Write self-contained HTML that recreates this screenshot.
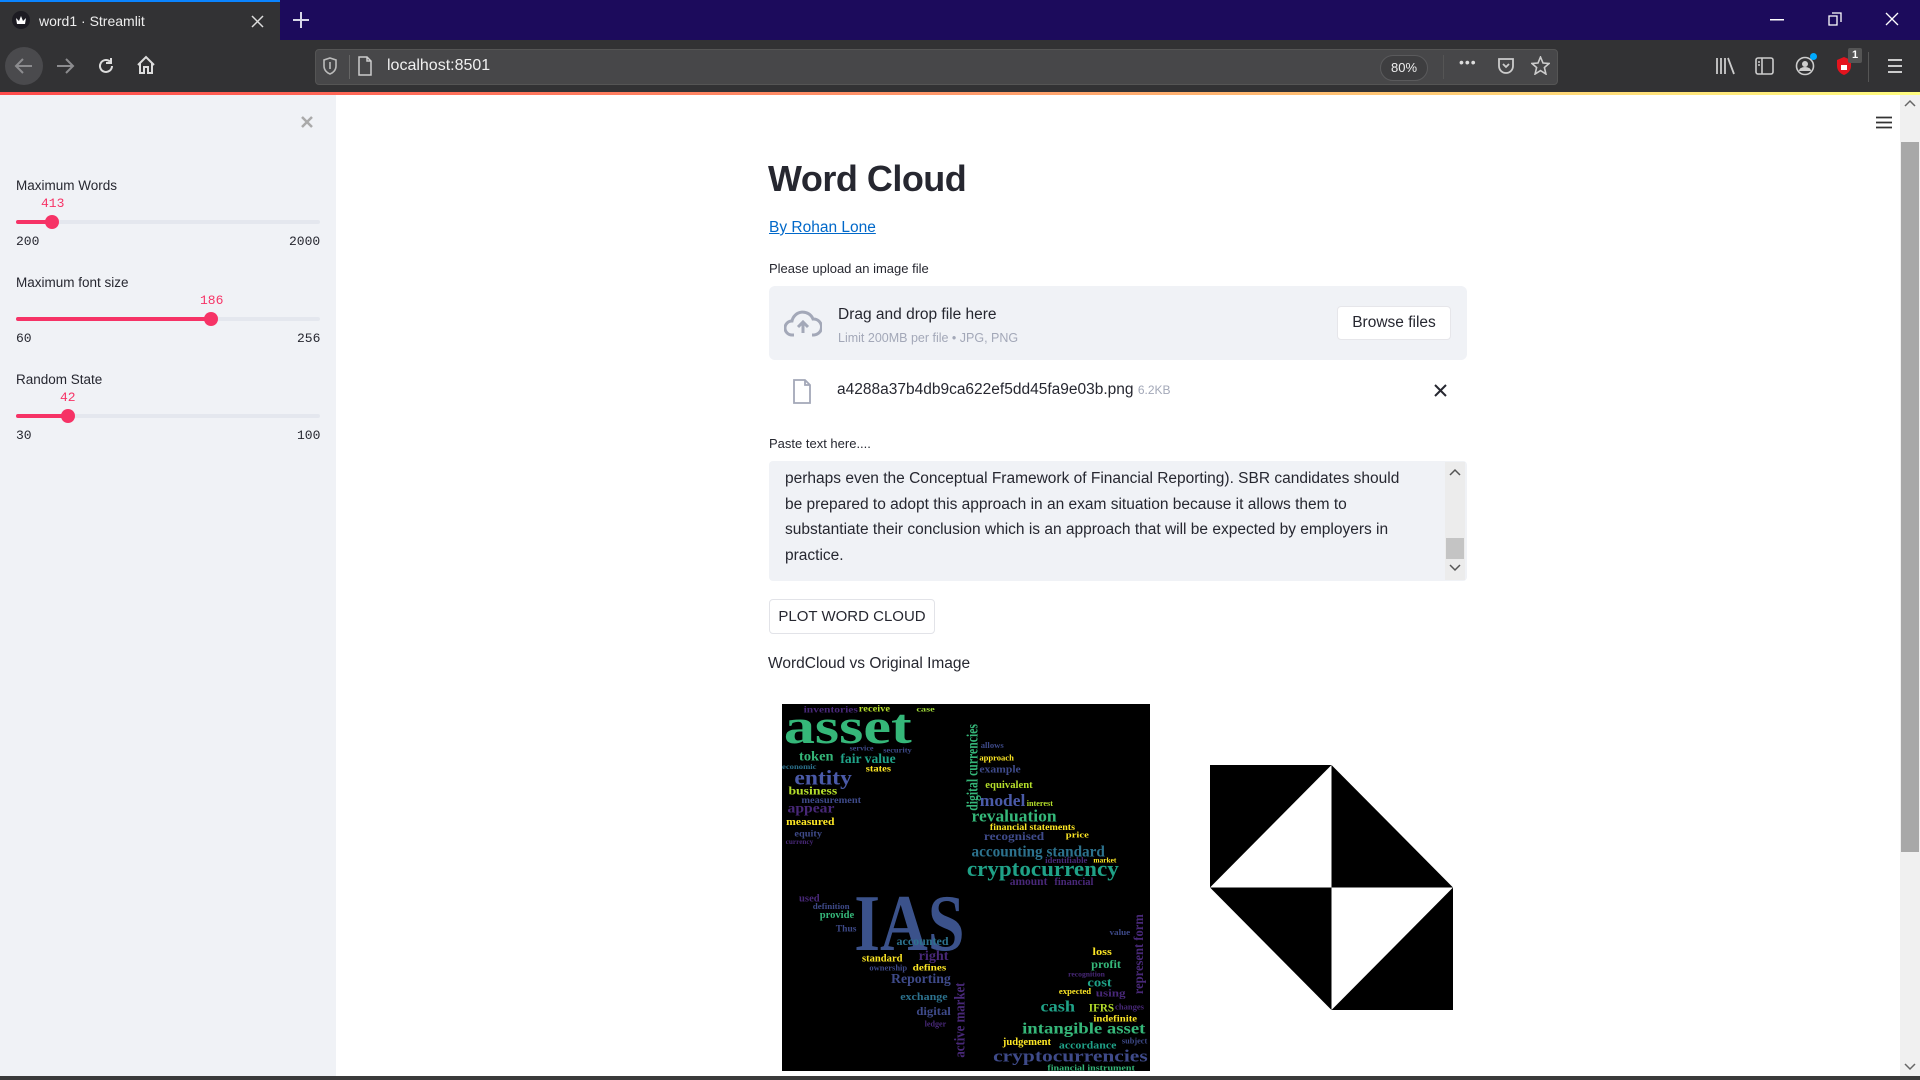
<!DOCTYPE html>
<html><head><meta charset="utf-8"><style>
*{margin:0;padding:0;box-sizing:border-box}
body{width:1920px;height:1080px;overflow:hidden;position:relative;font-family:"Liberation Sans",sans-serif;background:#fff;color:#262730}
.a{position:absolute}
.tabbar{left:0;top:0;width:1920px;height:40px;background:#1c0b5c}
.tab{left:0;top:0;width:280px;height:40px;background:#323234;border-top:2px solid #0a84ff}
.toolbar{left:0;top:40px;width:1920px;height:53px;background:#323234}
.url{left:315px;top:49px;width:1243px;height:36px;background:#474749;border:1px solid #555;border-radius:4px}
.grad{left:0;top:92px;width:1920px;height:3px;background:linear-gradient(90deg,#ff4b4b,#ff9a6b 50%,#fffd80)}
.side{left:0;top:95px;width:336px;height:982px;background:#f0f2f6}
.lab{font-size:13.5px;color:#262730}
.val{font-family:"Liberation Mono",monospace;font-size:13px;color:#f63366}
.mm{font-family:"Liberation Mono",monospace;font-size:13px;color:#262730}
.track{height:4px;background:#e4e7ee;border-radius:2px;left:16px;width:304px}
.fill{height:4px;background:#f63366;border-radius:2px;left:16px}
.thumb{width:14px;height:14px;border-radius:50%;background:#f63366}
.small{font-size:13px;color:#262730}
.wc text{font-family:"Liberation Serif",serif;font-weight:bold}
</style></head><body>
<div class="a tabbar"></div>
<div class="a tab">
 <div class="a" style="left:12px;top:9px;width:18px;height:18px;border-radius:50%;background:#1c1b22"></div>
 <svg class="a" style="left:14px;top:11px" width="14" height="14" viewBox="0 0 14 14"><path d="M2 5l3 3 2-5 2 5 3-3-1 6H3z" fill="#fff"/></svg>
 <div class="a" style="left:39px;top:11px;font-size:14px;color:#eee">word1 · Streamlit</div>
 <svg class="a" style="left:251px;top:13px" width="13" height="13"><path d="M1 1L12 12M12 1L1 12" stroke="#ddd" stroke-width="1.5"/></svg>
</div>
<svg class="a" style="left:292px;top:11px" width="18" height="18"><path d="M9 1v16M1 9h16" stroke="#d8d8e8" stroke-width="2"/></svg>
<svg class="a" style="left:1770px;top:19px" width="14" height="2"><rect width="14" height="1.5" fill="#fff"/></svg>
<svg class="a" style="left:1828px;top:12px" width="14" height="14"><path d="M4 1h9v9M1 4h8v9H1z" stroke="#fff" fill="none" stroke-width="1.3"/></svg>
<svg class="a" style="left:1885px;top:12px" width="14" height="14"><path d="M1 1L13 13M13 1L1 13" stroke="#fff" stroke-width="1.3"/></svg>

<div class="a toolbar"></div>
<div class="a" style="left:5px;top:47px;width:38px;height:38px;border-radius:50%;background:#4a4a4d"></div>
<svg class="a" style="left:14px;top:56px" width="20" height="20"><path d="M18 10H3M9 3L2 10l7 7" stroke="#8c8c8f" stroke-width="2" fill="none"/></svg>
<svg class="a" style="left:55px;top:56px" width="20" height="20"><path d="M2 10h15M11 3l7 7-7 7" stroke="#8c8c8f" stroke-width="2" fill="none"/></svg>
<svg class="a" style="left:96px;top:56px" width="20" height="20"><path d="M16 10a6 6 0 1 1-2-4.5M15 2v5h-5" stroke="#ddd" stroke-width="2" fill="none"/></svg>
<svg class="a" style="left:136px;top:55px" width="20" height="20"><path d="M2 10L10 2l8 8M4 8v10h4v-6h4v6h4V8" stroke="#ddd" stroke-width="2" fill="none"/></svg>
<div class="a url"></div>
<svg class="a" style="left:323px;top:57px" width="14" height="18"><path d="M7 1l6 2v6c0 4-3 7-6 8-3-1-6-4-6-8V3z M7 5v7" stroke="#bbb" stroke-width="1.6" fill="none"/></svg>
<div class="a" style="left:349px;top:55px;width:1px;height:24px;background:#666"></div>
<svg class="a" style="left:357px;top:56px" width="16" height="20"><path d="M2 1h8l4 4v14H2z M10 1v4h4" stroke="#ccc" stroke-width="1.5" fill="none"/></svg>
<div class="a" style="left:387px;top:57px;font-size:16px;color:#f0f0f0">localhost:8501</div>
<div class="a" style="left:1380px;top:55px;width:48px;height:26px;border-radius:13px;border:1px solid #5a5a5c;background:#3e3e40;font-size:13px;color:#eee;text-align:center;line-height:24px">80%</div>
<div class="a" style="left:1443px;top:55px;width:1px;height:24px;background:#555"></div>
<div class="a" style="left:1459px;top:54px;font-size:14px;color:#ddd;letter-spacing:1px">•••</div>
<svg class="a" style="left:1497px;top:57px" width="18" height="18"><path d="M2 2h14v7a7 7 0 0 1-14 0z M6 7l3 3 3-3" stroke="#ccc" stroke-width="1.8" fill="none"/></svg>
<svg class="a" style="left:1531px;top:56px" width="19" height="19"><path d="M9.5 1l2.5 6 6 .5-4.6 4 1.5 6.5-5.4-3.4L4.1 18l1.5-6.5L1 7.5l6-.5z" stroke="#ccc" stroke-width="1.6" fill="none"/></svg>
<svg class="a" style="left:1715px;top:57px" width="20" height="18"><path d="M2 1v16M6 1v16M10 1v16M13 1l6 16" stroke="#ccc" stroke-width="1.8"/></svg>
<svg class="a" style="left:1755px;top:57px" width="19" height="18"><rect x="1" y="1" width="17" height="16" rx="2" stroke="#ccc" stroke-width="1.6" fill="none"/><path d="M7 1v16M3 5h2M3 8h2" stroke="#ccc" stroke-width="1.6"/></svg>
<svg class="a" style="left:1795px;top:56px" width="20" height="20"><circle cx="10" cy="10" r="8.5" stroke="#ccc" stroke-width="1.6" fill="none"/><circle cx="10" cy="8" r="3" fill="#ccc"/><path d="M4 15a6 4 0 0 1 12 0" fill="#ccc"/></svg>
<div class="a" style="left:1810px;top:53px;width:7px;height:7px;border-radius:50%;background:#0af"></div>
<svg class="a" style="left:1836px;top:56px" width="16" height="20"><path d="M8 1l7 3v6c0 5-4 8-7 9-3-1-7-4-7-9V4z" fill="#e4141e"/><rect x="5" y="9" width="6" height="5" fill="#fff"/></svg>
<div class="a" style="left:1848px;top:48px;width:14px;height:15px;background:#555;color:#fff;font-size:11px;font-weight:bold;text-align:center;line-height:15px;border-radius:2px">1</div>
<div class="a" style="left:1868px;top:52px;width:1px;height:30px;background:#555"></div>
<svg class="a" style="left:1887px;top:58px" width="16" height="16"><path d="M1 2h14M1 8h14M1 14h14" stroke="#ccc" stroke-width="2"/></svg>
<div class="a grad"></div>

<div class="a side"></div>
<svg class="a" style="left:301px;top:116px" width="12" height="12"><path d="M1 1L11 11M11 1L1 11" stroke="#aaa" stroke-width="2.5"/></svg>
<div class="a lab" style="left:16px;top:178px">Maximum Words</div>
<div class="a val" style="left:41px;top:196px">413</div>
<div class="a track" style="top:220px"></div><div class="a fill" style="top:220px;width:36px"></div><div class="a thumb" style="left:45px;top:215px"></div>
<div class="a mm" style="left:16px;top:234px">200</div><div class="a mm" style="left:289px;top:234px">2000</div>
<div class="a lab" style="left:16px;top:275px">Maximum font size</div>
<div class="a val" style="left:200px;top:293px">186</div>
<div class="a track" style="top:317px"></div><div class="a fill" style="top:317px;width:195px"></div><div class="a thumb" style="left:204px;top:312px"></div>
<div class="a mm" style="left:16px;top:331px">60</div><div class="a mm" style="left:297px;top:331px">256</div>
<div class="a lab" style="left:16px;top:372px">Random State</div>
<div class="a val" style="left:60px;top:390px">42</div>
<div class="a track" style="top:414px"></div><div class="a fill" style="top:414px;width:52px"></div><div class="a thumb" style="left:61px;top:409px"></div>
<div class="a mm" style="left:16px;top:428px">30</div><div class="a mm" style="left:297px;top:428px">100</div>

<svg class="a" style="left:1876px;top:116px" width="16" height="13"><path d="M0 1.5h16M0 6.5h16M0 11.5h16" stroke="#333" stroke-width="1.8"/></svg>
<div class="a" style="left:1900px;top:95px;width:20px;height:982px;background:#f0f0f0"></div>
<div class="a" style="left:1901px;top:142px;width:18px;height:710px;background:#a8a8a8"></div>
<svg class="a" style="left:1904px;top:99px" width="12" height="8"><path d="M1 7l5-5 5 5" stroke="#666" stroke-width="1.5" fill="none"/></svg>
<svg class="a" style="left:1904px;top:1063px" width="12" height="8"><path d="M1 1l5 5 5-5" stroke="#666" stroke-width="1.5" fill="none"/></svg>
<div class="a" style="left:0;top:1076px;width:1920px;height:4px;background:#3a3a3a"></div>

<div class="a" style="left:768px;top:158px;font-size:36px;font-weight:bold;color:#262730;letter-spacing:-0.5px">Word Cloud</div>
<div class="a" style="left:769px;top:219px;font-size:15.5px;color:#0068c9;text-decoration:underline">By Rohan Lone</div>
<div class="a small" style="left:769px;top:261px">Please upload an image file</div>
<div class="a" style="left:769px;top:286px;width:698px;height:74px;background:#f0f2f6;border-radius:6px"></div>
<svg class="a" style="left:784px;top:309px" width="38" height="28" viewBox="0 0 38 28"><path d="M10 26H8a7 7 0 0 1 0-14 11 11 0 0 1 21-2 8 8 0 0 1 1 16h-2" stroke="#a3a8b8" stroke-width="3" fill="none"/><path d="M19 24V13M14 18l5-5 5 5" stroke="#a3a8b8" stroke-width="3" fill="none"/></svg>
<div class="a" style="left:838px;top:306px;font-size:15.5px;color:#262730">Drag and drop file here</div>
<div class="a" style="left:838px;top:331px;font-size:12.5px;color:#a3a8b8">Limit 200MB per file • JPG, PNG</div>
<div class="a" style="left:1337px;top:306px;width:114px;height:34px;background:#fff;border:1px solid #e6e6ea;border-radius:4px;font-size:15.5px;text-align:center;line-height:32px;color:#262730">Browse files</div>
<svg class="a" style="left:793px;top:379px" width="18" height="25"><path d="M1 1h11l5 5v18H1z M12 1v5h5" stroke="#a3a8b8" stroke-width="1.8" fill="none"/></svg>
<div class="a" style="left:837px;top:381px;font-size:15.5px;color:#262730">a4288a37b4db9ca622ef5dd45fa9e03b.png <span style="font-size:12px;color:#a3a8b8">6.2KB</span></div>
<svg class="a" style="left:1434px;top:384px" width="13" height="13"><path d="M1 1L12 12M12 1L1 12" stroke="#262730" stroke-width="2"/></svg>
<div class="a small" style="left:769px;top:436px">Paste text here....</div>
<div class="a" style="left:769px;top:461px;width:698px;height:120px;background:#f0f2f6;border-radius:4px"></div>
<div class="a" style="left:785px;top:466px;font-size:15.5px;line-height:25.7px;color:#262730;white-space:nowrap">perhaps even the Conceptual Framework of Financial Reporting). SBR candidates should<br>be prepared to adopt this approach in an exam situation because it allows them to<br>substantiate their conclusion which is an approach that will be expected by employers in<br>practice.</div>
<div class="a" style="left:1445px;top:462px;width:20px;height:118px;background:#ececec"></div>
<div class="a" style="left:1446px;top:538px;width:18px;height:21px;background:#c4c4c4"></div>
<svg class="a" style="left:1449px;top:468px" width="12" height="8"><path d="M1 7l5-5 5 5" stroke="#555" stroke-width="1.5" fill="none"/></svg>
<svg class="a" style="left:1449px;top:564px" width="12" height="8"><path d="M1 1l5 5 5-5" stroke="#555" stroke-width="1.5" fill="none"/></svg>
<div class="a" style="left:769px;top:599px;width:166px;height:35px;border:1px solid #e2e3e8;border-radius:4px;font-size:15px;line-height:33px;text-align:center;color:#262730">PLOT WORD CLOUD</div>
<div class="a" style="left:768px;top:655px;font-size:15.5px;color:#262730">WordCloud vs Original Image</div>

<svg class="a wc" style="left:782px;top:704px" width="368" height="367" viewBox="0 0 800 1100" preserveAspectRatio="none">
<rect width="800" height="1100" fill="#000"/>
<g font-size="28">
<text x="4" y="117" font-size="150" fill="#35b779" textLength="278" lengthAdjust="spacingAndGlyphs">asset</text>
<text x="47" y="25" fill="#482878" textLength="118" lengthAdjust="spacingAndGlyphs">inventories</text>
<text x="167" y="22" fill="#b5de2b" textLength="68" lengthAdjust="spacingAndGlyphs">receive</text>
<text x="292" y="22" fill="#a0da39" font-size="22" textLength="40" lengthAdjust="spacingAndGlyphs">case</text>
<text x="147" y="139" fill="#3e4a89" font-size="22" textLength="52" lengthAdjust="spacingAndGlyphs">service</text>
<text x="220" y="145" fill="#3e4a89" font-size="22" textLength="62" lengthAdjust="spacingAndGlyphs">security</text>
<text x="37" y="169" fill="#35b779" font-size="40" textLength="75" lengthAdjust="spacingAndGlyphs">token</text>
<text x="127" y="177" fill="#1fa187" font-size="42" textLength="120" lengthAdjust="spacingAndGlyphs">fair value</text>
<text x="0" y="195" fill="#2c728e" font-size="22" textLength="75" lengthAdjust="spacingAndGlyphs">economic</text>
<text x="182" y="202" fill="#fde725" font-size="28" textLength="55" lengthAdjust="spacingAndGlyphs">states</text>
<text x="27" y="242" fill="#4a5aa8" font-size="64" textLength="125" lengthAdjust="spacingAndGlyphs">entity</text>
<text x="14" y="272" fill="#b5de2b" font-size="36" textLength="106" lengthAdjust="spacingAndGlyphs">business</text>
<text x="42" y="297" fill="#3e4a89" font-size="28" textLength="130" lengthAdjust="spacingAndGlyphs">measurement</text>
<text x="12" y="325" fill="#482878" font-size="42" textLength="102" lengthAdjust="spacingAndGlyphs">appear</text>
<text x="9" y="363" fill="#fde725" font-size="32" textLength="105" lengthAdjust="spacingAndGlyphs">measured</text>
<text x="27" y="397" fill="#3e4a89" font-size="28" textLength="60" lengthAdjust="spacingAndGlyphs">equity</text>
<text x="8" y="420" fill="#482878" font-size="22" textLength="60" lengthAdjust="spacingAndGlyphs">currency</text>
<text transform="translate(425,320) rotate(-90)" fill="#35b779" font-size="34" textLength="260" lengthAdjust="spacingAndGlyphs">digital currencies</text>
<text x="432" y="132" fill="#3e4a89" font-size="26" textLength="50" lengthAdjust="spacingAndGlyphs">allows</text>
<text x="429" y="169" fill="#fde725" font-size="24" textLength="75" lengthAdjust="spacingAndGlyphs">approach</text>
<text x="429" y="205" fill="#3e4a89" font-size="30" textLength="90" lengthAdjust="spacingAndGlyphs">example</text>
<text x="442" y="252" fill="#b5de2b" font-size="30" textLength="103" lengthAdjust="spacingAndGlyphs">equivalent</text>
<text x="430" y="305" fill="#4a5aa8" font-size="52" textLength="99" lengthAdjust="spacingAndGlyphs">model</text>
<text x="532" y="305" fill="#b5de2b" font-size="24" textLength="57" lengthAdjust="spacingAndGlyphs">interest</text>
<text x="412" y="352" fill="#35b779" font-size="52" textLength="185" lengthAdjust="spacingAndGlyphs">revaluation</text>
<text x="452" y="377" fill="#fde725" font-size="28" textLength="185" lengthAdjust="spacingAndGlyphs">financial statements</text>
<text x="439" y="407" fill="#3e4a89" font-size="36" textLength="131" lengthAdjust="spacingAndGlyphs">recognised</text>
<text x="617" y="400" fill="#fde725" font-size="26" textLength="50" lengthAdjust="spacingAndGlyphs">price</text>
<text x="412" y="457" fill="#2c728e" font-size="46" textLength="290" lengthAdjust="spacingAndGlyphs">accounting standard</text>
<text x="572" y="477" fill="#482878" font-size="24" textLength="92" lengthAdjust="spacingAndGlyphs">identifiable</text>
<text x="677" y="475" fill="#fde725" font-size="22" textLength="50" lengthAdjust="spacingAndGlyphs">market</text>
<text x="402" y="515" fill="#1fa187" font-size="68" textLength="330" lengthAdjust="spacingAndGlyphs">cryptocurrency</text>
<text x="495" y="542" fill="#482878" font-size="34" textLength="82" lengthAdjust="spacingAndGlyphs">amount</text>
<text x="592" y="542" fill="#482878" font-size="32" textLength="85" lengthAdjust="spacingAndGlyphs">financial</text>
<text x="157" y="737" fill="#3b528b" font-size="240" textLength="240" lengthAdjust="spacingAndGlyphs">IAS</text>
<text x="37" y="592" fill="#482878" font-size="30" textLength="45" lengthAdjust="spacingAndGlyphs">used</text>
<text x="67" y="615" fill="#3e4a89" font-size="26" textLength="80" lengthAdjust="spacingAndGlyphs">definition</text>
<text x="82" y="642" fill="#35b779" font-size="30" textLength="75" lengthAdjust="spacingAndGlyphs">provide</text>
<text x="117" y="682" fill="#3e4a89" font-size="28" textLength="45" lengthAdjust="spacingAndGlyphs">Thus</text>
<text x="249" y="722" fill="#2c728e" font-size="34" textLength="113" lengthAdjust="spacingAndGlyphs">accounted</text>
<text x="174" y="772" fill="#fde725" font-size="30" textLength="88" lengthAdjust="spacingAndGlyphs">standard</text>
<text x="297" y="767" fill="#482878" font-size="40" textLength="65" lengthAdjust="spacingAndGlyphs">right</text>
<text x="190" y="799" fill="#3e4a89" font-size="24" textLength="82" lengthAdjust="spacingAndGlyphs">ownership</text>
<text x="284" y="799" fill="#fde725" font-size="28" textLength="73" lengthAdjust="spacingAndGlyphs">defines</text>
<text x="237" y="837" fill="#3e4a89" font-size="40" textLength="130" lengthAdjust="spacingAndGlyphs">Reporting</text>
<text x="257" y="887" fill="#2c728e" font-size="30" textLength="103" lengthAdjust="spacingAndGlyphs">exchange</text>
<text x="292" y="932" fill="#3e4a89" font-size="36" textLength="75" lengthAdjust="spacingAndGlyphs">digital</text>
<text x="310" y="967" fill="#482878" font-size="24" textLength="47" lengthAdjust="spacingAndGlyphs">ledger</text>
<text transform="translate(397,1060) rotate(-90)" fill="#482878" font-size="32" textLength="225" lengthAdjust="spacingAndGlyphs">active market</text>
<text x="712" y="692" fill="#3e4a89" font-size="26" textLength="45" lengthAdjust="spacingAndGlyphs">value</text>
<text x="675" y="752" fill="#fde725" font-size="32" textLength="42" lengthAdjust="spacingAndGlyphs">loss</text>
<text x="672" y="792" fill="#35b779" font-size="36" textLength="65" lengthAdjust="spacingAndGlyphs">profit</text>
<text transform="translate(785,870) rotate(-90)" fill="#482878" font-size="30" textLength="240" lengthAdjust="spacingAndGlyphs">represent form</text>
<text x="622" y="817" fill="#482878" font-size="22" textLength="80" lengthAdjust="spacingAndGlyphs">recognition</text>
<text x="664" y="847" fill="#1fa187" font-size="38" textLength="53" lengthAdjust="spacingAndGlyphs">cost</text>
<text x="602" y="869" fill="#fde725" font-size="26" textLength="70" lengthAdjust="spacingAndGlyphs">expected</text>
<text x="682" y="877" fill="#482878" font-size="32" textLength="65" lengthAdjust="spacingAndGlyphs">using</text>
<text x="562" y="922" fill="#1fa187" font-size="46" textLength="75" lengthAdjust="spacingAndGlyphs">cash</text>
<text x="667" y="922" fill="#b5de2b" font-size="34" textLength="55" lengthAdjust="spacingAndGlyphs">IFRS</text>
<text x="724" y="915" fill="#482878" font-size="24" textLength="63" lengthAdjust="spacingAndGlyphs">changes</text>
<text x="677" y="952" fill="#fde725" font-size="28" textLength="95" lengthAdjust="spacingAndGlyphs">indefinite</text>
<text x="522" y="987" fill="#35b779" font-size="46" textLength="268" lengthAdjust="spacingAndGlyphs">intangible asset</text>
<text x="480" y="1022" fill="#fde725" font-size="30" textLength="105" lengthAdjust="spacingAndGlyphs">judgement</text>
<text x="602" y="1032" fill="#1fa187" font-size="30" textLength="125" lengthAdjust="spacingAndGlyphs">accordance</text>
<text x="739" y="1017" fill="#3e4a89" font-size="24" textLength="55" lengthAdjust="spacingAndGlyphs">subject</text>
<text x="459" y="1072" fill="#3e4a89" font-size="50" textLength="336" lengthAdjust="spacingAndGlyphs">cryptocurrencies</text>
<text x="577" y="1098" fill="#35b779" font-size="26" textLength="190" lengthAdjust="spacingAndGlyphs">financial instrument</text>
</g>
</svg>

<svg class="a" style="left:1210px;top:765px" width="243" height="245" viewBox="0 0 2 2" preserveAspectRatio="none">
<rect width="2" height="2" fill="#fff"/>
<path d="M0 0H1L0 1z" fill="#000"/>
<path d="M1 0V1H2z" fill="#000"/>
<path d="M0 1H1V2z" fill="#000"/>
<path d="M2 1V2H1z" fill="#000"/>
</svg>
</body></html>
